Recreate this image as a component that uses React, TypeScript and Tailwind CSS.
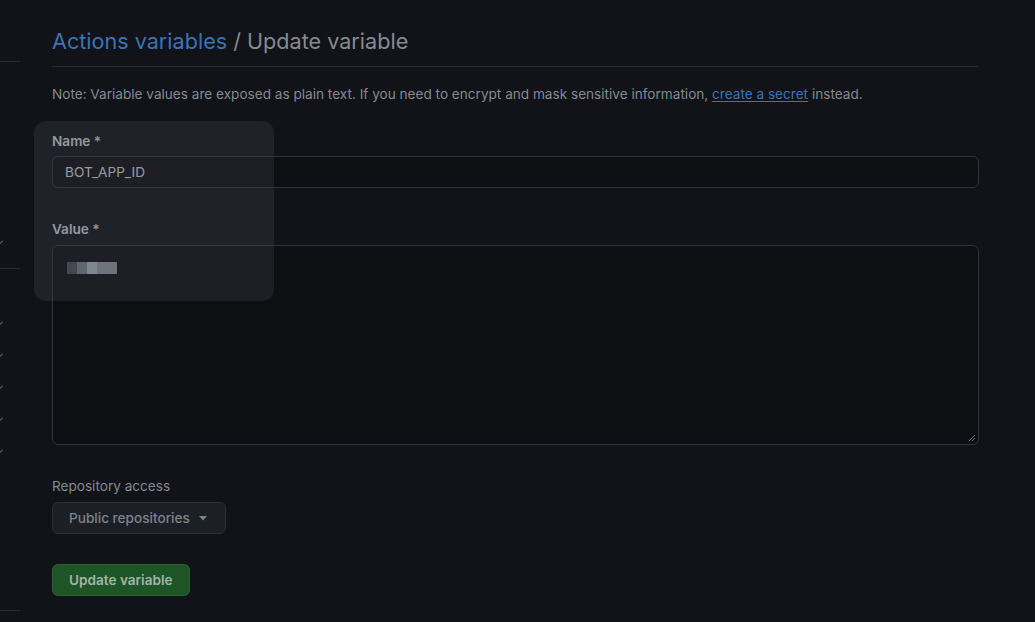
import React from 'react';

const SidebarStub = () => {
    // bits of the left nav that peek into the crop
    const chevrons = [242, 323, 355, 387, 419, 451];
    return (
        <div className="relative w-[20px] shrink-0">
            <div className="absolute left-0 top-[61px] h-px w-[20px] bg-[#262a31]" />
            <div className="absolute left-0 top-[268px] h-px w-[20px] bg-[#262a31]" />
            <div className="absolute left-0 top-[610px] h-px w-[20px] bg-[#262a31]" />
            {chevrons.map(y => (
                <svg key={y} className="absolute left-[-3px]" style={{ top: y - 3 }} width="6" height="6" viewBox="0 0 6 6">
                    <path d="M0 1.5 L3 4.5 L6 1.5" stroke="#7d8590" strokeWidth="1" fill="none" />
                </svg>
            ))}
        </div>
    );
};

export default function App() {
    return (
        <div className="relative flex h-[622px] w-[1035px] overflow-hidden bg-[#111318] font-['Inter','Liberation_Sans',sans-serif] text-[#c9d1d9]">
            <SidebarStub />

            <main className="ml-[32px] w-[927px] pt-[26px]">
                <div className="border-b border-[#262a31] pb-[10px]">
                    <h1 className="text-[21.6px] leading-[30px]">
                        <a className="text-[#3d72b4]">Actions variables</a>
                        <span className="text-[#878a90]"> / Update variable</span>
                    </h1>
                </div>

                <p className="mt-[17px] text-[13.6px] leading-[20px] text-[#848a92]">
                    Note: Variable values are exposed as plain text. If you need to encrypt and mask sensitive information,{' '}
                    <a className="text-[#3d72b4] underline underline-offset-2">create a secret</a> instead.
                </p>

                <div className="mt-[27px]">
                    <label className="block text-[13.6px] font-semibold leading-[20px] text-[#c4c8cd]">Name *</label>
                    <div className="mt-[5px] flex h-[32px] items-center rounded-[6px] border border-[#30343b] bg-[#0e0f13] px-[12px] text-[13.6px] text-[#c9cdd2]">
                        BOT_APP_ID
                    </div>
                </div>

                <div className="mt-[31px]">
                    <label className="block text-[13.6px] font-semibold leading-[20px] text-[#c4c8cd]">Value *</label>
                    <div className="relative mt-[6px] h-[200px] rounded-[6px] border border-[#30343b] bg-[#0e0f13]">
                        {/* pixelated value */}
                        <div className="absolute left-[14px] top-[16px] flex h-[12px]">
                            <div className="w-[10px] bg-[#4a4f57]" />
                            <div className="w-[10px] bg-[#767b83]" />
                            <div className="w-[10px] bg-[#a7adb4]" />
                            <div className="w-[10px] bg-[#8c9198]" />
                            <div className="w-[10px] bg-[#8c9198]" />
                        </div>
                        <svg className="absolute bottom-[2px] right-[2px]" width="8" height="8" viewBox="0 0 8 8">
                            <path d="M7 1 L1 7 M7 4 L4 7" stroke="#6e7681" strokeWidth="1" />
                        </svg>
                    </div>
                </div>

                <div className="mt-[31px]">
                    <div className="text-[13.6px] leading-[20px] text-[#848a92]">Repository access</div>
                    <button className="mt-[6px] flex h-[32px] items-center gap-[9px] rounded-[6px] border border-[#2a2e35] bg-[#1c1f25] pl-[16px] pr-[18px] text-[13.6px] font-medium text-[#7d838b]">
                        Public repositories
                        <svg width="8" height="5" viewBox="0 0 8 5">
                            <path d="M0 0 L8 0 L4 4.5 Z" fill="#7d838b" />
                        </svg>
                    </button>
                </div>

                <button className="mt-[30px] flex h-[32px] items-center rounded-[6px] border border-[#2e5f33] bg-[#1d5527] px-[16px] text-[13.6px] font-semibold text-[#a4b3a7]">
                    Update variable
                </button>
            </main>

            {/* translucent mask from the screenshot tool */}
            <div className="absolute left-[34px] top-[121px] h-[180px] w-[240px] rounded-[12px] bg-[#3a4048]/35" />
        </div>
    );
}
